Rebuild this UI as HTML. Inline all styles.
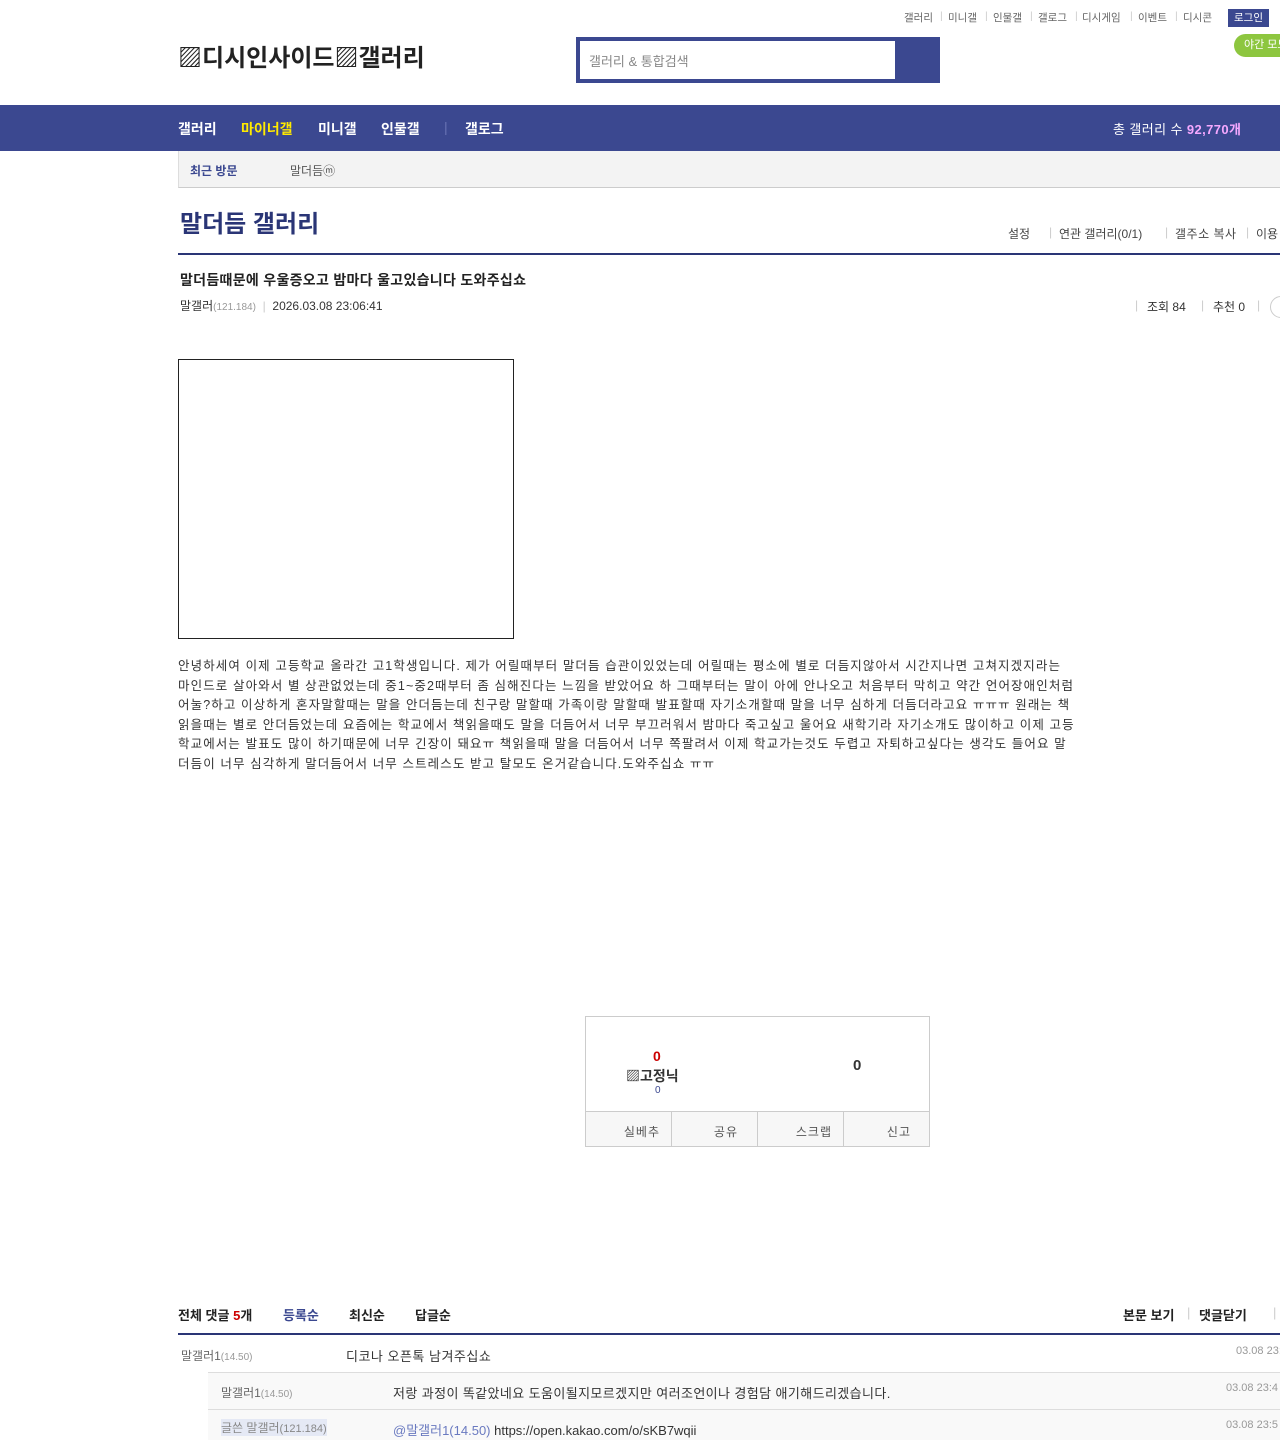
<!DOCTYPE html>
<html><head><meta charset="utf-8"><style>
*{margin:0;padding:0;box-sizing:border-box}
body{width:1280px;height:1440px;overflow:hidden;background:#fff;font-family:"Liberation Sans","Noto Sans CJK KR",sans-serif;color:#333;position:relative;font-size:12px}
.a{position:absolute;white-space:nowrap}
.nav{position:absolute;left:0;top:105px;width:1280px;height:46px;background:#3b4890}
.sub{position:absolute;left:178px;top:151px;width:1102px;height:37px;background:#f3f3f3;border-left:1px solid #ddd;border-bottom:1px solid #ccc}
.body{font-size:12.5px;line-height:19.5px;color:#333;white-space:normal;letter-spacing:1.1px;word-break:break-all}
.rb{position:absolute;left:585px;top:1016px;width:345px;height:131px;border:1px solid #ccc}
.cell{position:absolute;top:94px;height:35px;background:#f7f7f7;border-top:1px solid #ccc;border-right:1px solid #ccc;font-size:12px;color:#555;text-align:right;padding:11px 14px 0 0;letter-spacing:1px}
.t{font-size:10.5px;color:#666;top:10px}
.n{top:119px;font-size:14px;font-weight:bold;color:#fff}
.h{top:1305px;font-size:13px;font-weight:bold;color:#222}
</style></head><body>
<div class="a t" style="left:904px">갤러리</div><div class="a t" style="left:940px;color:#ccc">|</div>
<div class="a t" style="left:948px">미니갤</div><div class="a t" style="left:985px;color:#ccc">|</div>
<div class="a t" style="left:993px">인물갤</div><div class="a t" style="left:1030px;color:#ccc">|</div>
<div class="a t" style="left:1038px">갤로그</div><div class="a t" style="left:1075px;color:#ccc">|</div>
<div class="a t" style="left:1082px">디시게임</div><div class="a t" style="left:1130px;color:#ccc">|</div>
<div class="a t" style="left:1138px">이벤트</div><div class="a t" style="left:1175px;color:#ccc">|</div>
<div class="a t" style="left:1183px">디시콘</div>
<div class="a" style="left:1228px;top:9px;width:41px;height:18px;background:#3b4890;color:#fff;font-size:10.5px;text-align:center;line-height:18px">로그인</div>
<div class="a" style="left:1234px;top:34px;width:60px;height:23px;background:#8dc63f;border-radius:12px;color:#fff;font-size:11px;line-height:23px;padding-left:10px">야간 모드</div>
<div class="a" style="left:178px;top:38px;font-size:24px;font-weight:bold;color:#222">▨디시인사이드▨갤러리</div>
<div class="a" style="left:576px;top:37px;width:364px;height:46px;background:#3b4890"></div>
<div class="a" style="left:580px;top:41px;width:315px;height:38px;background:#fff;color:#888;font-size:13px;padding:10px 0 0 9px">갤러리 &amp; 통합검색</div>
<div class="nav"></div>
<div class="a n" style="left:178px">갤러리</div>
<div class="a n" style="left:241px;color:#ffea00">마이너갤</div>
<div class="a n" style="left:318px">미니갤</div>
<div class="a n" style="left:381px">인물갤</div>
<div class="a n" style="left:444px;color:#6873b4;font-weight:normal">|</div>
<div class="a n" style="left:465px">갤로그</div>
<div class="a" style="left:1113px;top:119px;font-size:13px;color:#fff;letter-spacing:0.4px">총 갤러리 수 <b style="color:#f5a8ff">92,770개</b></div>
<div class="sub"></div>
<div class="a" style="left:190px;top:162px;font-size:12px;font-weight:bold;color:#3b4890">최근 방문</div>
<div class="a" style="left:290px;top:162px;font-size:12px;color:#555">말더듬ⓜ</div>
<div class="a" style="left:180px;top:204px;font-size:24px;font-weight:bold;color:#2a3576">말더듬 갤러리</div>
<div class="a" style="left:1008px;top:225px;font-size:12px;color:#444">설정</div>
<div class="a" style="left:1049px;top:225px;font-size:12px;color:#ccc">|</div>
<div class="a" style="left:1059px;top:225px;font-size:12px;color:#444">연관 갤러리(0/1)</div>
<div class="a" style="left:1165px;top:225px;font-size:12px;color:#ccc">|</div>
<div class="a" style="left:1175px;top:225px;font-size:12px;color:#444;letter-spacing:0.5px">갤주소 복사</div>
<div class="a" style="left:1246px;top:225px;font-size:12px;color:#ccc">|</div>
<div class="a" style="left:1256px;top:225px;font-size:12px;color:#444">이용</div>
<div class="a" style="left:178px;top:253px;width:1102px;height:2px;background:#2a3576"></div>
<div class="a" style="left:180px;top:270px;font-size:14px;font-weight:bold;color:#222;letter-spacing:0.3px">말더듬때문에 우울증오고 밤마다 울고있습니다 도와주십쇼</div>
<div class="a" style="left:180px;top:297px;font-size:12px;color:#333">말갤러<span style="color:#999;font-size:10px">(121.184)</span> <span style="color:#ccc">&nbsp;|&nbsp;</span> 2026.03.08 23:06:41</div>
<div class="a" style="left:1135px;top:298px;font-size:12px;color:#ccc">|</div>
<div class="a" style="left:1147px;top:298px;font-size:12px;color:#333">조회 84</div>
<div class="a" style="left:1201px;top:298px;font-size:12px;color:#ccc">|</div>
<div class="a" style="left:1213px;top:298px;font-size:12px;color:#333">추천 0</div>
<div class="a" style="left:1257px;top:298px;font-size:12px;color:#ccc">|</div>
<div class="a" style="left:1270px;top:296px;width:24px;height:22px;border:1px solid #ccc;border-radius:11px"></div>
<div class="a" style="left:178px;top:359px;width:336px;height:280px;border:1px solid #222"></div>
<div class="a body" style="left:178px;top:657px;width:900px">안녕하세여 이제 고등학교 올라간 고1학생입니다. 제가 어릴때부터 말더듬 습관이있었는데 어릴때는 평소에 별로 더듬지않아서 시간지나면 고쳐지겠지라는 마인드로 살아와서 별 상관없었는데 중1~중2때부터 좀 심해진다는 느낌을 받았어요 하 그때부터는 말이 아에 안나오고 처음부터 막히고 약간 언어장애인처럼 어눌?하고 이상하게 혼자말할때는 말을 안더듬는데 친구랑 말할때 가족이랑 말할때 발표할때 자기소개할때 말을 너무 심하게 더듬더라고요 ㅠㅠㅠ 원래는 책 읽을때는 별로 안더듬었는데 요즘에는 학교에서 책읽을때도 말을 더듬어서 너무 부끄러워서 밤마다 죽고싶고 울어요 새학기라 자기소개도 많이하고 이제 고등학교에서는 발표도 많이 하기때문에 너무 긴장이 돼요ㅠ 책읽을때 말을 더듬어서 너무 쪽팔려서 이제 학교가는것도 두렵고 자퇴하고싶다는 생각도 들어요 말더듬이 너무 심각하게 말더듬어서 너무 스트레스도 받고 탈모도 온거같습니다.도와주십쇼 ㅠㅠ</div>
<div class="rb">
<div class="a" style="left:67px;top:31px;font-size:14px;font-weight:bold;color:#c00">0</div>
<div class="a" style="left:40px;top:49px;font-size:14px;font-weight:bold;color:#333">▨고정닉</div>
<div class="a" style="left:69px;top:68px;font-size:10px;color:#3b4890">0</div>
<div class="a" style="left:267px;top:40px;font-size:15px;font-weight:bold;color:#333">0</div>
<div class="cell" style="left:0;width:86px;padding-right:11px">실베추</div>
<div class="cell" style="left:86px;width:86px;padding-right:19px">공유</div>
<div class="cell" style="left:172px;width:86px;padding-right:11px">스크랩</div>
<div class="cell" style="left:258px;width:85px;border-right:0;padding-right:18px">신고</div>
</div>
<div class="a h" style="left:178px">전체 댓글 <span style="color:#c00">5</span>개</div>
<div class="a h" style="left:283px;color:#3b4890">등록순</div>
<div class="a h" style="left:349px">최신순</div>
<div class="a h" style="left:415px">답글순</div>
<div class="a h" style="left:1123px">본문 보기</div>
<div class="a h" style="left:1187px;color:#ccc;font-weight:normal">|</div>
<div class="a h" style="left:1199px">댓글닫기</div>
<div class="a h" style="left:1273px;color:#ccc;font-weight:normal">|</div>
<div class="a" style="left:178px;top:1333px;width:1102px;height:2px;background:#2a3576"></div>
<div class="a" style="left:181px;top:1347px;font-size:12px;color:#666">말갤러1<span style="font-size:10px;color:#999">(14.50)</span></div>
<div class="a" style="left:346px;top:1346px;font-size:13px;color:#333;letter-spacing:0.5px">디코나 오픈톡 남겨주십쇼</div>
<div class="a" style="left:1236px;top:1345px;font-size:11px;color:#999">03.08 23:</div>
<div class="a" style="left:208px;top:1372px;width:1072px;height:68px;background:#f9f9f9;border-top:1px solid #ddd"></div>
<div class="a" style="left:208px;top:1409px;width:1072px;height:1px;background:#ddd"></div>
<div class="a" style="left:221px;top:1384px;font-size:12px;color:#666">말갤러1<span style="font-size:10px;color:#999">(14.50)</span></div>
<div class="a" style="left:393px;top:1383px;font-size:13px;color:#333;letter-spacing:0.4px">저랑 과정이 똑같았네요 도움이될지모르겠지만 여러조언이나 경험담 애기해드리겠습니다.</div>
<div class="a" style="left:1226px;top:1382px;font-size:11px;color:#999">03.08 23:4</div>
<div class="a" style="left:221px;top:1419px;font-size:12px;color:#888;background:#e5e9f5">글쓴 말갤러<span style="font-size:11px">(121.184)</span></div>
<div class="a" style="left:393px;top:1420px;font-size:13px;color:#333"><span style="color:#6a7ac0">@말갤러1(14.50)</span> https://open.kakao.com/o/sKB7wqii</div>
<div class="a" style="left:1226px;top:1419px;font-size:11px;color:#999">03.08 23:5</div>
</body></html>
